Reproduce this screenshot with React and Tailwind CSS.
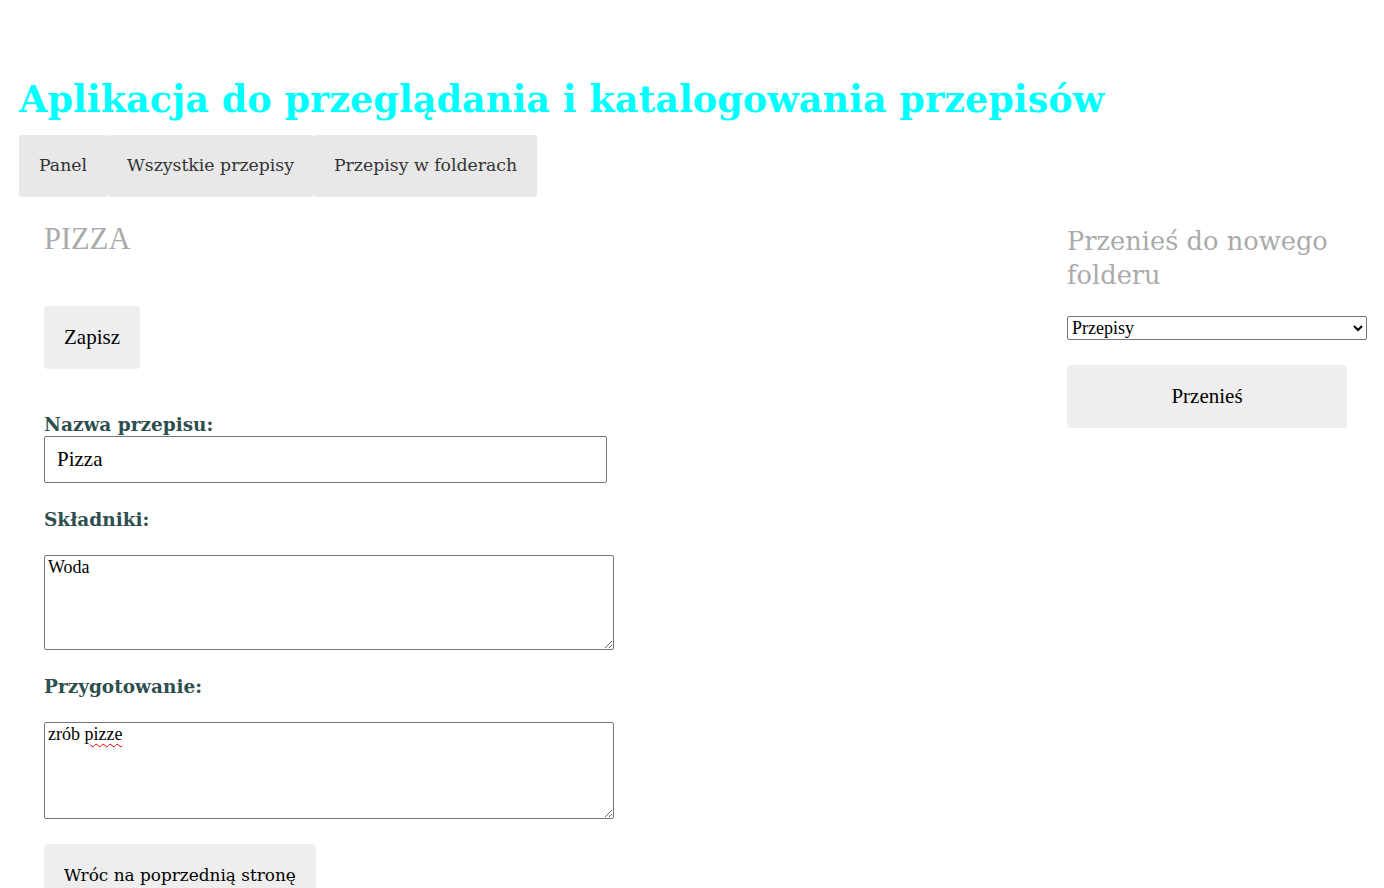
export default function App() {
    return (
        <div className="min-h-screen bg-white pt-[77px] pl-[19px] pr-[17px] font-['Liberation_Serif',serif] text-black">
            {/* Header */}
            <h1 className="font-['DejaVu_Serif',serif] text-[36.6px] leading-[45px] font-bold text-[#00ffff] whitespace-nowrap">
                Aplikacja do przeglądania i katalogowania przepisów
            </h1>
            <nav className="mt-[13px] flex">
                {["Panel", "Wszystkie przepisy", "Przepisy w folderach"].map((label) => (
                    <button
                        key={label}
                        className="h-[62px] px-[20px] bg-[#e8e8e8] rounded-[3px] font-['DejaVu_Serif',serif] text-[17.3px] text-[#333333]"
                    >
                        {label}
                    </button>
                ))}
            </nav>

            <div className="flex justify-between">
                {/* Recipe form */}
                <div className="pl-[25px]">
                    <h2 className="mt-[25px] text-[30.5px] leading-[34px] text-[#aaaaaa]">PIZZA</h2>
                    <button className="mt-[50px] h-[63px] px-[20px] bg-[#eeeeee] rounded-[4px] text-[21px]">
                        Zapisz
                    </button>

                    <label className="mt-[45px] block font-['DejaVu_Serif',serif] font-bold text-[18.5px] leading-[22px] text-[#2f4f4f]">
                        Nazwa przepisu:
                    </label>
                    <input
                        type="text"
                        defaultValue="Pizza"
                        className="block w-[563px] h-[47px] px-[12px] border border-[#767676] rounded-[2px] text-[21px]"
                    />

                    <label className="mt-[26px] block font-['DejaVu_Serif',serif] font-bold text-[18.5px] leading-[22px] text-[#2f4f4f]">
                        Składniki:
                    </label>
                    <textarea
                        defaultValue="Woda"
                        spellCheck={false}
                        className="mt-[24px] block w-[570px] h-[95px] px-[3px] py-[1px] border border-[#767676] rounded-[2px] text-[18px] leading-[21px]"
                    />

                    <label className="mt-[26px] block font-['DejaVu_Serif',serif] font-bold text-[18.5px] leading-[22px] text-[#2f4f4f]">
                        Przygotowanie:
                    </label>
                    <div className="relative mt-[24px] w-[570px]">
                        <textarea
                            defaultValue="zrób pizze"
                            spellCheck={false}
                            className="block w-[570px] h-[97px] px-[3px] py-[1px] border border-[#767676] rounded-[2px] text-[18px] leading-[21px]"
                        />
                        {/* spell-check squiggle */}
                        <span className="pointer-events-none absolute left-[4px] top-[2px] text-[18px] leading-[21px] text-transparent">
                            zrób{" "}
                            <span className="underline decoration-wavy decoration-[#e00000] decoration-1 underline-offset-[3px]">pizze</span>
                        </span>
                    </div>

                    <button className="mt-[25px] h-[63px] px-[20px] bg-[#eeeeee] rounded-[4px] font-['DejaVu_Serif',serif] text-[16.9px]">
                        Wróc na poprzednią stronę
                    </button>
                </div>

                {/* Move to folder */}
                <div className="w-[300px]">
                    <h2 className="mt-[27px] font-['DejaVu_Serif',serif] text-[25.7px] leading-[34px] text-[#aaaaaa]">
                        Przenieś do nowego folderu
                    </h2>
                    <select className="mt-[24px] block w-[300px] h-[24px] border border-[#767676] rounded-[2px] text-[18px]">
                        <option>Przepisy</option>
                    </select>
                    <button className="mt-[25px] block w-[280px] h-[63px] bg-[#eeeeee] rounded-[4px] text-[21px]">
                        Przenieś
                    </button>
                </div>
            </div>
        </div>
    );
}
